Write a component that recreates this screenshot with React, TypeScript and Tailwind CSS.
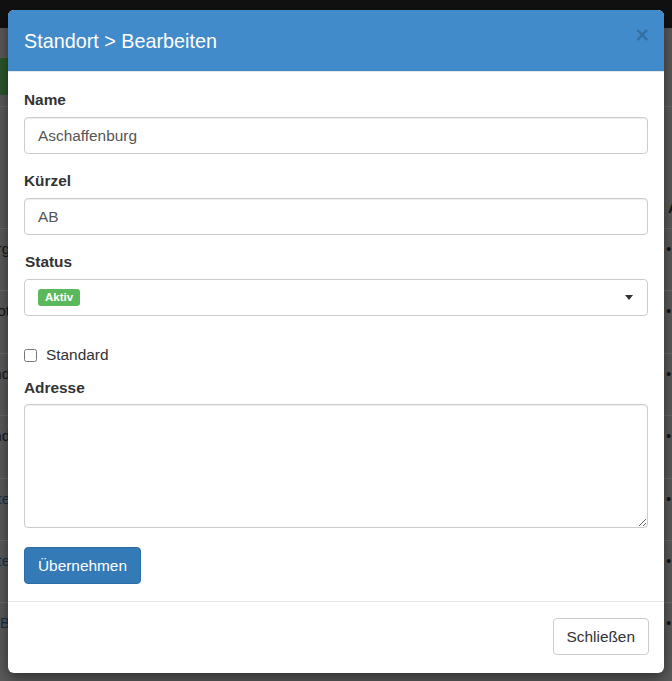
import React from "react";

const font = { fontFamily: '"Liberation Sans", Arial, Helvetica, sans-serif' };

const rows = [
  { left: "Nürnberg", link: false },
  { left: "Depot", link: false },
  { left: "Land", link: false },
  { left: "Stand", link: false },
  { left: "Seite", link: true },
  { left: "Seite", link: true },
  { left: "AB", link: true },
];

function BackgroundPage() {
  return (
    <div className="flex flex-col">
      <div className="h-[28px] bg-[#111]" />
      <div className="h-[653px] bg-[#5b5b5b] pt-[30px]">
        <div className="h-[37px] w-[140px] bg-[#2c572c]" />
        <div className="mt-[11px] flex h-[122px] items-end justify-end border-t border-[#666] pb-[9px]">
          <span className="w-[4px] overflow-hidden text-[15px] font-bold leading-[22px] text-[#151515]">A</span>
        </div>
        {rows.map((row, i) => (
          <div key={i} className="flex h-[62.4px] justify-between border-t border-[#6a6a6a] pt-[9px]">
            <div
              className={
                "w-[10px] whitespace-nowrap text-right text-[15px] leading-[22px] " +
                (row.link ? "text-[#16304a]" : "text-[#151515]")
              }
              dir="rtl"
            >
              {row.left}
            </div>
            <span className="w-[6px] overflow-hidden text-[15px] leading-[22px] text-[#151515]">•</span>
          </div>
        ))}
      </div>
    </div>
  );
}

function Field({ label, value }: { label: string; value: string }) {
  return (
    <div>
      <div className="text-[15.4px] font-bold leading-[22px] text-[#333]">{label}</div>
      <div className="mt-[6px] flex h-[37px] items-center rounded-[4px] border border-[#ccc] px-[13px] text-[15.4px] text-[#555] shadow-[inset_0_1px_1px_rgba(0,0,0,0.075)]">
        {value}
      </div>
    </div>
  );
}

export default function App() {
  return (
    <div className="relative h-[681px] w-[672px] overflow-hidden" style={font}>
      <BackgroundPage />

      <div className="absolute inset-0 pt-[10px] pl-[8px]">
        <div className="w-[656px] rounded-[6px] bg-white shadow-[0_5px_15px_rgba(0,0,0,0.5)]">
          <div className="flex h-[62px] items-start justify-between rounded-t-[6px] border-b border-[#e5e5e5] bg-[#428bca] pl-[16px] pr-[15px]">
            <h4 className="mt-[17px] text-[19.8px] leading-[28px] text-white">Standort &gt; Bearbeiten</h4>
            <button className="mt-[14px] text-[23px] font-bold leading-none text-black/20">×</button>
          </div>

          <div className="px-[16px] pt-[17px] pb-[17px]">
            <Field label="Name" value="Aschaffenburg" />
            <div className="mt-[16px]">
              <Field label="Kürzel" value="AB" />
            </div>

            <div className="mt-[16px]">
              <div className="pl-[1px] text-[15.4px] font-bold leading-[22px] text-[#333]">Status</div>
              <div className="mt-[6px] flex h-[37px] items-center justify-between rounded-[4px] border border-[#ccc] pl-[13px] pr-[14px]">
                <span className="flex h-[17px] items-center rounded-[3px] bg-[#5cb85c] px-[7px] text-[11.5px] font-bold text-white">
                  Aktiv
                </span>
                <span className="h-0 w-0 border-x-[4px] border-t-[5px] border-x-transparent border-t-[#333]" />
              </div>
            </div>

            <label className="mt-[28px] flex h-[22px] items-center gap-[9px] text-[15.4px] text-[#333]">
              <input type="checkbox" className="m-0 h-[13px] w-[13px]" />
              Standard
            </label>

            <div className="mt-[11px] text-[15.4px] font-bold leading-[22px] text-[#333]">Adresse</div>
            <textarea className="mt-[5px] block h-[124px] w-full rounded-[4px] border border-[#ccc] px-[13px] py-[7px] text-[15.4px] text-[#555] shadow-[inset_0_1px_1px_rgba(0,0,0,0.075)] outline-none" />

            <button className="mt-[19px] h-[37px] rounded-[4px] border border-[#2e6da4] bg-[#337ab7] px-[13px] text-[15.4px] text-white">
              Übernehmen
            </button>
          </div>

          <div className="flex justify-end border-t border-[#e5e5e5] px-[15px] pt-[16px] pb-[18px]">
            <button className="h-[37px] rounded-[4px] border border-[#ccc] bg-white px-[13px] text-[15.4px] text-[#333]">
              Schließen
            </button>
          </div>
        </div>
      </div>
    </div>
  );
}
